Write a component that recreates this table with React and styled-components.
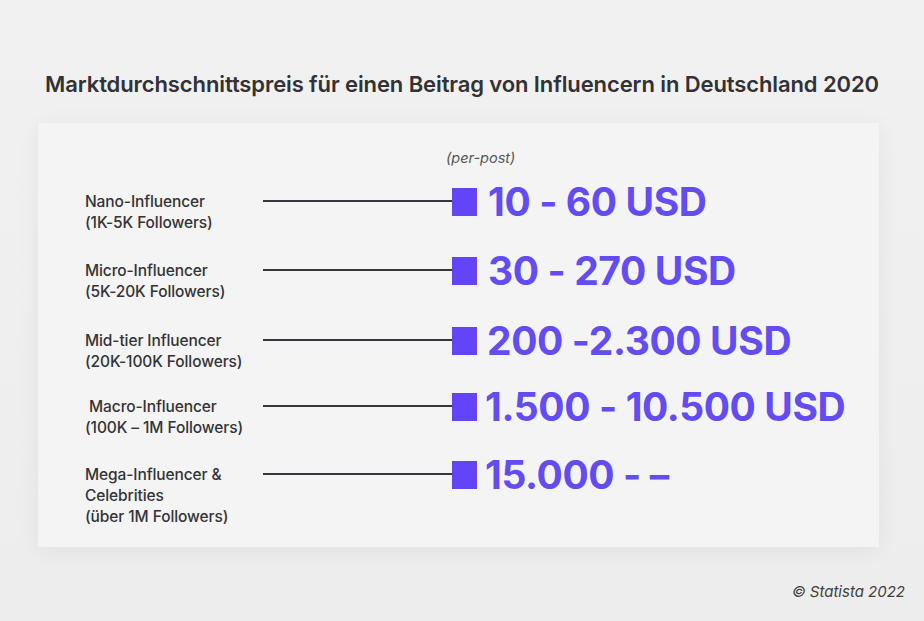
import React from "react";
import styled, { createGlobalStyle } from "styled-components";

const Global = createGlobalStyle`
  html, body { margin: 0; padding: 0; }
  body {
    background: linear-gradient(180deg, #f1f1f1 0%, #ededed 100%);
    font-family: Inter, "Noto Sans", "Liberation Sans", sans-serif;
    color: #333338;
  }
`;

const Page = styled.div`
  width: 924px;
  height: 621px;
  display: flex;
  flex-direction: column;
  box-sizing: border-box;
  padding-top: 71px;
`;

const Title = styled.h1`
  margin: 0;
  font-size: 22px;
  line-height: 26px;
  font-weight: 600;
  text-align: center;
  color: #313136;
  letter-spacing: -0.1px;
`;

const Card = styled.section`
  margin: 26px 0 0 38px;
  width: 841px;
  height: 424px;
  box-sizing: border-box;
  background: #f4f4f4;
  box-shadow: 0 4px 22px rgba(0, 0, 0, 0.06);
  padding: 25px 0 0 47px;
  display: flex;
  flex-direction: column;
`;

const Unit = styled.div`
  margin-left: 361px;
  font-size: 14.5px;
  line-height: 20px;
  font-style: italic;
  color: #55555a;
`;

const Rows = styled.div`
  margin-top: 23px;
  display: flex;
  flex-direction: column;
`;

const Row = styled.div`
  display: flex;
  align-items: flex-start;
  margin-top: ${(p) => p.$top}px;
`;

const Label = styled.div`
  width: 178px;
  font-size: 15.5px;
  line-height: 21px;
  font-weight: 500;
  color: #333338;
  white-space: pre;
  letter-spacing: -0.1px;
`;

const Connector = styled.div`
  height: 21px;
  display: flex;
  align-items: center;
`;

const Line = styled.div`
  width: 189px;
  height: 2px;
  margin-top: -2px;
  background: #35353d;
`;

const Marker = styled.div`
  width: 25px;
  height: 28px;
  background: #6344f6;
  flex: none;
`;

const Value = styled.div`
  margin-left: ${(p) => p.$gap}px;
  font-size: 39px;
  line-height: 1;
  font-weight: 700;
  color: #634cf3;
  white-space: nowrap;
  letter-spacing: -0.4px;
`;

const Footer = styled.div`
  margin-top: 35px;
  align-self: flex-end;
  margin-right: 19px;
  font-size: 15px;
  line-height: 20px;
  font-style: italic;
  color: #404045;
`;

const data = [
  { label: "Nano-Influencer\n(1K-5K Followers)", value: "10 - 60 USD", gap: 11, top: 0 },
  { label: "Micro-Influencer\n(5K-20K Followers)", value: "30 - 270 USD", gap: 11, top: 27 },
  { label: "Mid-tier Influencer\n(20K-100K Followers)", value: "200 -2.300 USD", gap: 10, top: 28 },
  { label: " Macro-Influencer\n(100K – 1M Followers)", value: "1.500 - 10.500 USD", gap: 8, top: 24 },
  { label: "Mega-Influencer &\nCelebrities\n(über 1M Followers)", value: "15.000 - –", gap: 8, top: 26 },
];

export default function App() {
  return (
    <>
      <Global />
      <Page>
        <Title>Marktdurchschnittspreis für einen Beitrag von Influencern in Deutschland 2020</Title>
        <Card>
          <Unit>(per-post)</Unit>
          <Rows>
            {data.map((d) => (
              <Row key={d.value} $top={d.top}>
                <Label>{d.label}</Label>
                <Connector>
                  <Line />
                  <Marker />
                  <Value $gap={d.gap}>{d.value}</Value>
                </Connector>
              </Row>
            ))}
          </Rows>
        </Card>
        <Footer>© Statista 2022</Footer>
      </Page>
    </>
  );
}
